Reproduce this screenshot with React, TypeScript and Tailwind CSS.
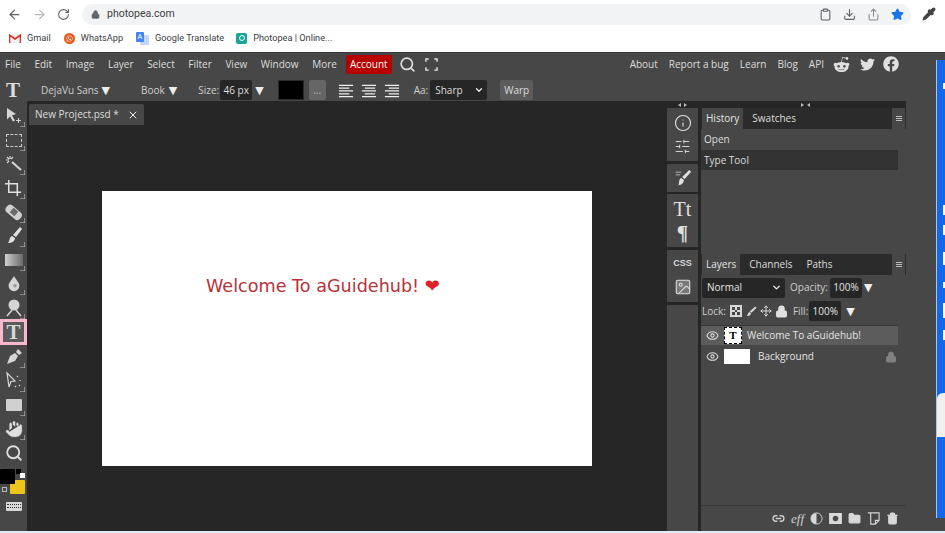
import React from 'react';
import {
  ArrowLeft,
  ArrowRight,
  RotateCw,
  Lock,
  Star,
  Search,
  X,
  Info,
  SlidersHorizontal,
  Image as ImageIcon,
  Eye,
  Share,
  Clipboard,
  Download,
  Pipette,
  ChevronDown,
  Hand,
  Move,
  Link2,
  Folder,
  Trash2,
} from 'lucide-react';
import { FaRedditAlien, FaTwitter, FaFacebook, FaWhatsapp } from 'react-icons/fa';

const menuItems = ['File', 'Edit', 'Image', 'Layer', 'Select', 'Filter', 'View', 'Window', 'More'];
const rightLinks = ['About', 'Report a bug', 'Learn', 'Blog', 'API'];

const Tri: React.FC<{ className?: string }> = ({ className = '' }) => (
  <span className={`font-['DejaVu_Sans',sans-serif] text-[11px] leading-none text-[#eeeeee] ${className}`}>▼</span>
);

const AlignIcon: React.FC<{ kind: 'left' | 'center' | 'right' }> = ({ kind }) => {
  const short = kind === 'left' ? 'M1 5h11M1 11h11' : kind === 'center' ? 'M4 5h11M4 11h11' : 'M5 5h11M5 11h11';
  return (
    <svg width="16" height="15" viewBox="0 0 17 15" stroke="#eeeeee" strokeWidth="1.3">
      <path d="M1 2h15M1 8h15M1 14h15" />
      <path d={short} />
    </svg>
  );
};

const ToolIcon: React.FC<{ children: React.ReactNode; corner?: boolean }> = ({ children, corner = true }) => (
  <div className="relative flex h-[24px] w-[27px] shrink-0 items-center justify-center">
    {children}
    {corner && (
      <svg className="absolute bottom-[1px] right-[2px]" width="5" height="5" viewBox="0 0 5 5">
        <path d="M0 5h5V0" fill="none" stroke="#cfcfcf" strokeWidth="1" />
      </svg>
    )}
  </div>
);

const Tools: React.FC = () => (
  <div className="flex w-[27px] shrink-0 flex-col items-center bg-[#474747] pt-[3px]">
    <ToolIcon>
      <svg width="20" height="20" viewBox="0 0 20 20" fill="#d5d5d5">
        <path d="M3 2l9 6-4 1.5 3 5-2 1-3-5-3 3z" />
        <path d="M14 12h1v2h2v1h-2v2h-1v-2h-2v-1h2z" />
      </svg>
    </ToolIcon>
    <ToolIcon>
      <div className="h-[13px] w-[16px] border border-dashed border-[#c8c8c8]" />
    </ToolIcon>
    <ToolIcon>
      <svg width="20" height="20" viewBox="0 0 20 20" fill="none" stroke="#d5d5d5">
        <path d="M8 8l9 8" strokeWidth="2" />
        <path d="M6 2v3M2 6h3M3 3l2 2M9 3L7 5M3 9l2-2" strokeWidth="1.2" />
      </svg>
    </ToolIcon>
    <ToolIcon>
      <svg width="19" height="19" viewBox="0 0 20 20" fill="none" stroke="#e0e0e0" strokeWidth="1.6">
        <path d="M5 1v13h13M1 5h13v13" />
      </svg>
    </ToolIcon>
    <ToolIcon>
      <svg width="20" height="20" viewBox="0 0 20 20">
        <rect x="1" y="6" width="18" height="9" rx="4" transform="rotate(40 10 10)" fill="#cfcfcf" />
        <rect x="7" y="7" width="6" height="6" transform="rotate(40 10 10)" fill="#6a6a6a" />
      </svg>
    </ToolIcon>
    <ToolIcon>
      <svg width="20" height="20" viewBox="0 0 20 20" fill="#e0e0e0">
        <path d="M16 1l2 2-6 8-3-2z" />
        <path d="M8 10l3 2c0 3-3 5-7 5 2-2 1-6 4-7z" />
      </svg>
    </ToolIcon>
    <ToolIcon>
      <div className="h-[12px] w-[18px] bg-gradient-to-r from-[#d0d0d0] to-[#6a6a6a]" />
    </ToolIcon>
    <ToolIcon>
      <svg width="18" height="18" viewBox="0 0 20 20">
        <path d="M10 1c2 4 6 7 6 11a6 6 0 01-12 0c0-4 4-7 6-11z" fill="#d5d5d5" />
        <circle cx="11" cy="12" r="2" fill="#9a9a9a" />
      </svg>
    </ToolIcon>
    <ToolIcon>
      <svg width="20" height="20" viewBox="0 0 20 20" fill="#d5d5d5">
        <circle cx="10" cy="7" r="5.5" />
        <path d="M8 12l-5 6M12 12l5 6" stroke="#d5d5d5" strokeWidth="1.5" />
      </svg>
    </ToolIcon>
    <div className="mt-[-1px] flex h-[26px] w-[27px] shrink-0 items-center justify-center border-[3px] border-[#f9b8cd] bg-[#5a5a5a]">
      <span className="font-['Liberation_Serif',serif] text-[21px] leading-none font-bold text-[#d8d8d8]">T</span>
    </div>
    <ToolIcon>
      <svg width="20" height="20" viewBox="0 0 20 20" fill="#d5d5d5">
        <path d="M14 2l4 4-3 2-3-3z" />
        <path d="M11 6l3 3-3 5-8 3 3-8z" />
      </svg>
    </ToolIcon>
    <ToolIcon>
      <svg width="20" height="20" viewBox="0 0 20 20" fill="none" stroke="#d5d5d5" strokeWidth="1.2">
        <path d="M3 2l8 8-4 .5L5 16z" />
        <path d="M13 5l1 1M16 9v1M15 14l1 1M11 15l1 1" />
      </svg>
    </ToolIcon>
    <ToolIcon>
      <div className="h-[12px] w-[16px] rounded-[1px] bg-[#d0d0d0]" />
    </ToolIcon>
    <ToolIcon>
      <Hand size={20} color="#474747" fill="#e0e0e0" strokeWidth={1} />
    </ToolIcon>
    <ToolIcon corner={false}>
      <Search size={18} color="#e0e0e0" strokeWidth={2.4} />
    </ToolIcon>
    <div className="relative mt-[4px] h-[26px] w-[27px] shrink-0">
      <div className="absolute left-[10px] top-[11px] h-[14px] w-[15px] rounded-[1px] bg-[#eec41a]" />
      <div className="absolute left-0 top-0 h-[15px] w-[15px] rounded-[1px] bg-black" />
      <div className="absolute left-[16px] top-0 h-[5px] w-[5px] bg-black" />
      <div className="absolute left-[20px] top-[4px] h-[5px] w-[5px] bg-white" />
      <div className="absolute left-[2px] top-[18px] h-[5px] w-[5px] border border-[#bbbbbb]" />
    </div>
    <div className="mt-[7px] flex h-[9px] w-[16px] shrink-0 flex-col justify-center gap-[1px] rounded-[1px] bg-[#d8d8d8] px-[1px]">
      <div className="h-[2px] border-t border-dotted border-[#333333]" />
      <div className="h-[2px] border-t border-dotted border-[#333333]" />
    </div>
  </div>
);

const PanelTabs: React.FC<{ tabs: string[] }> = ({ tabs }) => (
  <div className="flex h-[21px] shrink-0 bg-[#2b2b2b] text-[10px]">
    {tabs.map((tab, index) => (
      <div
        key={tab}
        className={
          index === 0
            ? 'ml-[1px] flex items-center bg-[#474747] px-[4px] text-[#e4e4e4]'
            : 'flex items-center pl-[9px] pr-[5px] text-[#dddddd]'
        }
      >
        {tab}
      </div>
    ))}
    <div className="ml-auto mr-[1px] flex w-[13px] flex-col items-center justify-center gap-[1px] bg-[#474747]">
      <div className="h-px w-[6px] bg-[#bbbbbb]" />
      <div className="h-px w-[6px] bg-[#bbbbbb]" />
      <div className="h-px w-[6px] bg-[#bbbbbb]" />
    </div>
  </div>
);

const SideStrip: React.FC = () => (
  <div className="flex w-[31px] shrink-0 flex-col bg-[#262626]">
    <div className="flex h-[7px] shrink-0 items-center justify-center gap-[2px]">
      <svg width="9" height="4" viewBox="0 0 9 4" fill="#bbbbbb">
        <path d="M0 2l3-2v4zM9 2L6 0v4z" />
      </svg>
    </div>
    <div className="flex h-[53px] shrink-0 flex-col items-center justify-center gap-[6px] bg-[#474747]">
      <Info size={18} color="#e0e0e0" strokeWidth={1.5} />
      <SlidersHorizontal size={17} color="#e0e0e0" strokeWidth={1.3} />
    </div>
    <div className="mt-[3px] flex h-[28px] shrink-0 items-center justify-center bg-[#474747]">
      <svg width="18" height="18" viewBox="0 0 20 20" fill="#e0e0e0">
        <path d="M17 1l2 2-7 8-3-2z" />
        <path d="M8 10l3 2c0 4-3 6-6 6 1-2 0-7 3-8z" />
        <path d="M2 3h6v1H2zM2 6h5v1H2z" />
      </svg>
    </div>
    <div className="mt-[2px] flex h-[53px] shrink-0 flex-col items-center justify-center gap-[2px] bg-[#474747]">
      <span className="font-['Liberation_Serif',serif] text-[20px] leading-[22px] text-[#e0e0e0]">Tt</span>
      <span className="font-['Liberation_Serif',serif] text-[21px] leading-[22px] font-bold text-[#e0e0e0]">¶</span>
    </div>
    <div className="mt-[3px] flex h-[52px] shrink-0 flex-col items-center justify-center gap-[9px] bg-[#474747]">
      <span className="font-['Liberation_Sans',sans-serif] text-[9px] leading-[12px] font-bold text-[#d8d8d8]">CSS</span>
      <ImageIcon size={18} color="#e0e0e0" fill="#7a7a7a" strokeWidth={1.4} />
    </div>
    <div className="mt-[3px] flex-1 bg-[#474747]" />
  </div>
);

const LayersPanel: React.FC = () => (
  <div className="flex min-h-0 flex-1 flex-col">
    <PanelTabs tabs={['Layers', 'Channels', 'Paths']} />
    <div className="flex h-[25px] shrink-0 items-center pl-[1px] text-[10px]">
      <div className="flex h-[20px] w-[83px] items-center justify-between rounded-[2px] bg-[#262626] pl-[5px] pr-[3px] text-[#e4e4e4]">
        Normal <ChevronDown size={11} color="#eeeeee" strokeWidth={3} />
      </div>
      <span className="ml-[5px] text-[#cccccc]">Opacity:</span>
      <div className="ml-[2px] flex h-[20px] w-[32px] items-center justify-center rounded-[2px] bg-[#262626] text-[#e4e4e4]">100%</div>
      <Tri className="ml-[2px]" />
    </div>
    <div className="flex h-[22px] shrink-0 items-center text-[10px] text-[#cccccc]">
      <span className="ml-[1px]">Lock:</span>
      <svg className="ml-[4px]" width="12" height="12" viewBox="0 0 12 12">
        <rect width="12" height="12" fill="#d8d8d8" />
        <path d="M2 2h3v3H2zM7 2h3v3H7zM5 5h2v2H5zM2 7h3v3H2zM7 7h3v3H7z" fill="#474747" />
      </svg>
      <svg className="ml-[4px]" width="11" height="12" viewBox="0 0 12 12" fill="#d8d8d8">
        <path d="M10 1l1.5 1.5L6 8 4 6.5zM3.5 7L5.5 8.5C5 11 3 11.5 1 11.5 2 10 2 8 3.5 7z" />
      </svg>
      <Move className="ml-[3px]" size={12} color="#d8d8d8" strokeWidth={2} />
      <Lock className="ml-[3px]" size={13} color="#e0e0e0" fill="#e0e0e0" />
      <span className="ml-[5px]">Fill:</span>
      <div className="ml-[1px] flex h-[20px] w-[32px] items-center justify-center rounded-[2px] bg-[#262626] text-[#e4e4e4]">100%</div>
      <Tri className="ml-[5px]" />
    </div>
    <div className="mr-[8px] mt-[3px] flex h-[20px] shrink-0 items-center border-t border-[#383838] bg-[#5c5c5c] pl-[5px] text-[10px] text-[#e4e4e4]">
      <Eye size={13} color="#d8d8d8" strokeWidth={2} />
      <div className="ml-[5px] flex h-[17px] w-[18px] items-center justify-center border border-dashed border-black bg-white">
        <span className="font-['Liberation_Serif',serif] text-[11px] leading-none font-bold text-black">T</span>
      </div>
      <span className="ml-[5px]">Welcome To aGuidehub!</span>
    </div>
    <div className="mr-[8px] flex h-[23px] shrink-0 items-center pl-[5px] text-[10px] text-[#e4e4e4]">
      <Eye size={13} color="#d8d8d8" strokeWidth={2} />
      <div className="ml-[5px] h-[15px] w-[26px] bg-white" />
      <span className="ml-[8px]">Background</span>
      <Lock className="ml-auto mr-[1px]" size={12} color="#808080" fill="#808080" />
    </div>
    <div className="mt-auto flex h-[26px] shrink-0 items-center justify-end gap-[6px] border-t border-[#3a3a3a] pr-[7px]">
      <Link2 size={13} color="#cfcfcf" strokeWidth={2.5} />
      <span className="font-['Liberation_Serif',serif] text-[13px] leading-none italic text-[#cfcfcf]">eff</span>
      <svg width="13" height="13" viewBox="0 0 14 14">
        <circle cx="7" cy="7" r="6" fill="#474747" stroke="#d8d8d8" />
        <path d="M7 1a6 6 0 000 12z" fill="#d8d8d8" />
      </svg>
      <svg width="13" height="11" viewBox="0 0 14 12">
        <rect width="14" height="12" fill="#d8d8d8" />
        <circle cx="7" cy="6" r="3" fill="#474747" />
      </svg>
      <Folder size={13} color="#d8d8d8" fill="#d8d8d8" />
      <svg width="13" height="13" viewBox="0 0 14 14" fill="none" stroke="#d8d8d8" strokeWidth="1.2">
        <path d="M1 1h12v8l-4 4H4V1M13 9H9v4" />
      </svg>
      <Trash2 size={13} color="#d8d8d8" fill="#d8d8d8" />
    </div>
  </div>
);

const App: React.FC = () => {
  return (
    <div className="flex h-[533px] w-[945px] flex-col overflow-hidden bg-white font-['Open_Sans',sans-serif]">
      {/* browser chrome */}
      <div className="flex h-[28px] shrink-0 items-center pl-[7px] pr-[8px]">
        <ArrowLeft size={15} color="#5f6368" strokeWidth={2} />
        <ArrowRight className="ml-[10px]" size={15} color="#b8bbbf" strokeWidth={2} />
        <RotateCw className="ml-[10px]" size={13} color="#5f6368" strokeWidth={2} />
        <div className="ml-[12px] flex h-[21px] flex-1 items-center rounded-full bg-[#f1f3f4] pl-[9px] pr-[7px]">
          <Lock size={9} color="#5f6368" fill="#5f6368" />
          <span className="ml-[7px] font-['Roboto',sans-serif] text-[10.5px] text-[#3c4043]">photopea.com</span>
          <div className="ml-auto flex items-center gap-[11px]">
            <Clipboard size={13} color="#5f6368" />
            <Download size={13} color="#5f6368" />
            <Share size={13} color="#8a8d91" />
            <Star size={13} color="#1a73e8" fill="#1a73e8" />
          </div>
        </div>
        <Pipette className="ml-[11px] mr-[1px]" size={14} color="#444444" fill="#444444" />
      </div>
      <div className="flex h-[24px] shrink-0 items-center pb-[4px] pl-[9px] font-['Roboto',sans-serif] text-[9.2px] text-[#3c4043]">
        <svg width="12" height="9" viewBox="0 0 12 9">
          <rect width="12" height="9" rx="1" fill="#f0f0f0" />
          <path d="M0.5 9V1L6 5l5.5-4v8" fill="none" stroke="#d93025" strokeWidth="1.6" />
        </svg>
        <span className="ml-[6px]">Gmail</span>
        <div className="ml-[13px] flex h-[11px] w-[11px] items-center justify-center rounded-full bg-[#e8571c]">
          <FaWhatsapp size={7} color="#ffffff" />
        </div>
        <span className="ml-[6px]">WhatsApp</span>
        <svg className="ml-[13px]" width="13" height="13" viewBox="0 0 13 13">
          <rect x="4" y="3" width="9" height="10" rx="1" fill="#c3d5f5" />
          <rect x="0" y="0" width="8" height="10" rx="1" fill="#4285f4" />
          <path d="M2 7l2-5 2 5M3 5.5h2" stroke="#ffffff" fill="none" strokeWidth="0.8" />
        </svg>
        <span className="ml-[6px]">Google Translate</span>
        <div className="ml-[12px] flex h-[11px] w-[11px] items-center justify-center rounded-[2px] bg-[#18a497]">
          <div className="h-[6px] w-[6px] rounded-full border border-white" />
        </div>
        <span className="ml-[6px]">Photopea | Online...</span>
      </div>

      {/* photopea */}
      <div className="flex min-h-0 flex-1 border-t border-[#3a3a3a] bg-[#474747]">
        <div className="flex w-[906px] shrink-0 flex-col">
          <div className="flex h-[24px] shrink-0 items-center pb-[2px] pl-[5px] text-[10px] text-[#dddddd]">
            <div className="flex gap-[13.6px]">
              {menuItems.map((item) => (
                <span key={item}>{item}</span>
              ))}
            </div>
            <div className="ml-[9px] flex h-[19px] items-center rounded-[2px] bg-[#b70000] px-[4px] text-white">Account</div>
            <Search className="ml-[7px]" size={17} color="#dddddd" strokeWidth={2.4} />
            <svg className="ml-[9px]" width="13" height="13" viewBox="0 0 14 14" fill="none" stroke="#e4e4e4" strokeWidth="1.5">
              <path d="M1 4V1h3M10 1h3v3M13 10v3h-3M4 13H1v-3" />
            </svg>
            <div className="ml-auto flex items-center gap-[11px]">
              {rightLinks.map((link) => (
                <span key={link}>{link}</span>
              ))}
              <FaRedditAlien className="ml-[-2px]" size={17} color="#e0e0e0" />
              <FaTwitter className="ml-[-1px]" size={15} color="#e0e0e0" />
              <FaFacebook className="ml-[-3px] mr-[7px]" size={16} color="#e0e0e0" />
            </div>
          </div>
          <div className="flex h-[24px] shrink-0 items-center pt-[2px] text-[10px] text-[#cfcfcf]">
            <span className="ml-[6px] w-[35px] font-['Liberation_Serif',serif] text-[21px] leading-none font-bold text-[#dddddd]">T</span>
            <span>DejaVu Sans</span>
            <Tri className="ml-[3px]" />
            <span className="ml-[31px]">Book</span>
            <Tri className="ml-[4px]" />
            <span className="ml-[21px]">Size:</span>
            <div className="ml-[1px] flex h-[20px] w-[32px] items-center justify-center rounded-[2px] bg-[#262626] text-[#dddddd]">46 px</div>
            <Tri className="ml-[3px]" />
            <div className="ml-[14px] h-[20px] w-[26px] rounded-[1px] border border-[#2a2a2a] bg-black" />
            <div className="ml-[5px] flex h-[20px] w-[17px] items-center justify-center rounded-[2px] bg-[#666666] text-[#bbbbbb]">...</div>
            <div className="ml-[12px] flex gap-[7px]">
              <AlignIcon kind="left" />
              <AlignIcon kind="center" />
              <AlignIcon kind="right" />
            </div>
            <span className="ml-[14px]">Aa:</span>
            <div className="ml-[2px] flex h-[20px] w-[57px] items-center justify-between rounded-[2px] bg-[#262626] pl-[5px] pr-[3px] text-[#dddddd]">
              Sharp <ChevronDown size={10} color="#eeeeee" strokeWidth={3} />
            </div>
            <div className="ml-[13px] flex h-[20px] items-center rounded-[2px] bg-[#5c5c5c] px-[4px] text-[#dddddd]">Warp</div>
          </div>
          <div className="flex min-h-0 flex-1">
            <Tools />
            <div className="flex min-w-0 flex-1 flex-col bg-[#262626]">
              <div className="flex h-[24px] shrink-0 pl-[2px] pt-[3px]">
                <div className="flex h-[21px] items-center rounded-t-[2px] bg-[#474747] pl-[6px] pr-[5px] text-[10px] text-[#dddddd]">
                  New Project.psd *
                  <X className="ml-[8px]" size={12} color="#eeeeee" strokeWidth={2} />
                </div>
              </div>
              <div className="flex min-h-0 flex-1 items-center justify-center">
                <div className="h-[275px] w-[490px] bg-white pl-[104px] pt-[81px] font-['DejaVu_Sans',sans-serif] text-[17.6px] leading-[28px] text-[#b4343a]">
                  Welcome To aGuidehub! <span className="text-[18px] text-[#e0202a]">❤</span>
                </div>
              </div>
            </div>
            <SideStrip />
            <div className="flex w-[208px] shrink-0 flex-col border-l-[3px] border-[#262626]">
              <div className="flex h-[7px] shrink-0 items-center justify-center bg-[#262626] pl-[4px]">
                <svg width="9" height="4" viewBox="0 0 9 4" fill="#bbbbbb">
                  <path d="M3 2L0 0v4zM6 2l3-2v4z" />
                </svg>
              </div>
              <div className="flex h-[146px] shrink-0 flex-col">
                <PanelTabs tabs={['History', 'Swatches']} />
                <div className="flex h-[21px] items-center pl-[3px] text-[10px] text-[#dddddd]">Open</div>
                <div className="mr-[8px] flex h-[20px] items-center bg-[#333333] pl-[3px] text-[10px] text-[#dddddd]">Type Tool</div>
              </div>
              <LayersPanel />
            </div>
          </div>
        </div>
        {/* clipped page content beside the app */}
        <div className="mb-[13px] ml-[30px] mt-[7px] flex flex-1 flex-col items-end border-l border-[#aac8f0] bg-[#1268e8]">
          <div className="mt-[23px] h-[6px] w-[2px] bg-white" />
          <div className="mt-[116px] h-[10px] w-[2px] bg-white" />
          <div className="mt-[10px] h-[10px] w-[2px] bg-white" />
          <div className="mt-[17px] h-[13px] w-[2px] bg-white" />
          <div className="mt-[17px] h-[6px] w-[2px] bg-white" />
          <div className="mt-[15px] h-[15px] w-[2px] bg-white" />
          <div className="mt-[12px] h-[10px] w-[2px] bg-white" />
          <div className="mt-[53px] h-[44px] w-full rounded-tl-[6px] bg-[#f0f0ee]" />
        </div>
      </div>
      <div className="h-[2px] shrink-0 bg-[#dfeaf2]" />
    </div>
  );
};

export default App;
